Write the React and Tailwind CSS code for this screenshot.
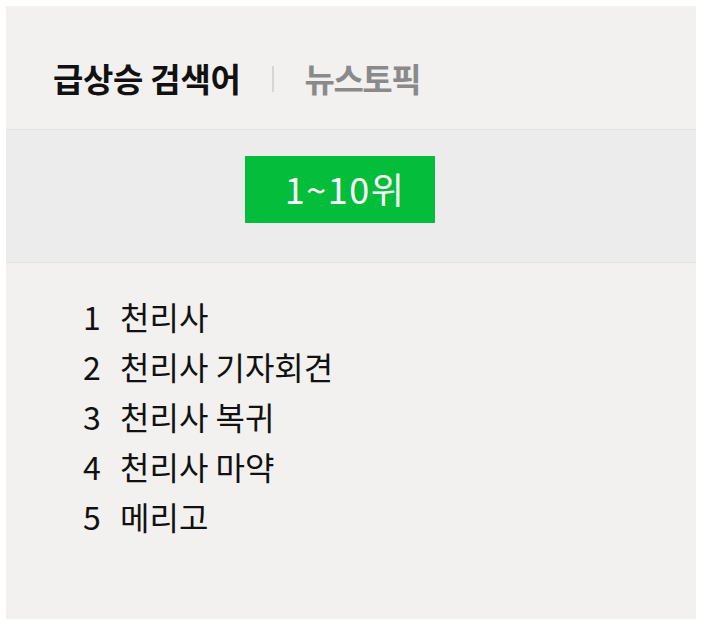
const KEYWORDS = ['천리사', '천리사 기자회견', '천리사 복귀', '천리사 마약', '메리고'];

export default function App() {
  return (
    <div className="min-h-[635px] bg-white p-[6px] font-['Noto_Sans_CJK_KR','Noto_Sans',sans-serif]">
      <div className="w-[690px] h-[613px] bg-[#f2f1ef]">
        {/* Tabs */}
        <div className="h-[124px] border-b border-[#e3e3e3] flex items-center pl-[47px] pt-[22px]">
          <span className="text-[33px] font-bold text-[#111] tracking-[-0.3px]">급상승 검색어</span>
          <span className="mx-[31px] w-[2px] h-[26px] bg-[#d6d6d6]" />
          <span className="text-[33px] font-bold text-[#8a8a8a] tracking-[-1.5px]">뉴스토픽</span>
        </div>

        {/* Range */}
        <div className="h-[133px] bg-[#ececec] border-b border-[#e3e3e3] pt-[26px] pl-[239px]">
          <div className="w-[190px] h-[67px] bg-[#03bd3b] flex items-center justify-center pl-[10px] pb-[4px] text-white text-[36px] tracking-[1.5px] leading-none">
            1~10위
          </div>
        </div>

        {/* List */}
        <ol className="pt-[28px] pl-[77px]">
          {KEYWORDS.map((kw, i) => (
            <li key={kw} className="h-[50px] flex items-center text-[32px] text-[#111]">
              <span className="w-[37px]">{i + 1}</span>
              <span>{kw}</span>
            </li>
          ))}
        </ol>
      </div>
    </div>
  );
}
